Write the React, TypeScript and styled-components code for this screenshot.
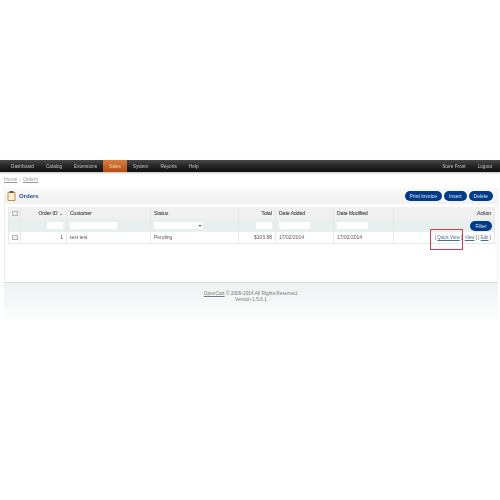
import styled, { createGlobalStyle } from "styled-components";

const Global = createGlobalStyle`
  html, body {
    margin: 0;
    padding: 0;
    background: #fff;
  }
  body {
    font-family: "Liberation Sans", Arial, sans-serif;
    font-size: 5px;
    color: #555;
  }
  * { box-sizing: border-box; }
`;

const Page = styled.div`
  width: 500px;
  height: 500px;
  padding-top: 160px;
  overflow: hidden;
  filter: blur(0.35px);
`;

const Nav = styled.div`
  height: 12px;
  display: flex;
  align-items: center;
  justify-content: space-between;
  background: linear-gradient(#474747, #222 55%, #111);
  box-shadow: 0 1px 2px rgba(0, 0, 0, 0.25);
`;

const NavGroup = styled.div<{ $pad?: number }>`
  display: flex;
  height: 100%;
  padding-left: ${({ $pad }) => $pad ?? 0}px;
  padding-right: ${({ $pad }) => ($pad ? 0 : 2)}px;
`;

const NavItem = styled.a<{ $active?: boolean }>`
  display: flex;
  align-items: center;
  padding: 0 6px;
  color: ${({ $active }) => ($active ? "#f3d3ba" : "#c4c4c4")};
  background: ${({ $active }) =>
    $active ? "linear-gradient(#d97f3f, #b64c12)" : "transparent"};
  font-size: 4.7px;
`;

const Breadcrumb = styled.div`
  height: 14px;
  padding: 4px 0 0 4px;
  color: #999;
  font-size: 5px;
  line-height: 6px;
`;

const Crumb = styled.span`
  text-decoration: underline;
`;

const Box = styled.div`
  margin: 2px 2px 0 4px;
  height: 94px;
  border-left: 1px solid #f0f0f0;
  border-right: 1px solid #f0f0f0;
`;

const Heading = styled.div`
  height: 16px;
  display: flex;
  align-items: center;
  justify-content: space-between;
  padding: 0 4px 0 2px;
  background: linear-gradient(#f9f9f9, #f2f2f2);
`;

const HeadTitle = styled.div`
  display: flex;
  align-items: center;
  gap: 3px;
  color: #1a4a8c;
  font-size: 6px;
  font-weight: bold;
`;

const Buttons = styled.div`
  display: flex;
  gap: 2px;
`;

const Button = styled.a`
  display: flex;
  align-items: center;
  justify-content: center;
  height: 10px;
  padding: 0 5px;
  border-radius: 5px;
  background: #003a88;
  color: #dfe8f5;
  font-size: 5px;
`;

const FilterButton = styled(Button)`
  display: inline-flex;
  width: 22px;
  margin-right: -1px;
`;

const Content = styled.div`
  padding: 3px 3px 0 3px;
`;

const Table = styled.table`
  width: 486px;
  table-layout: fixed;
  border-collapse: collapse;
  border-bottom: 1px solid #e8e8e8;
`;

const Col = styled.col<{ $w: number }>`
  width: ${({ $w }) => $w}px;
`;

const HeadRow = styled.tr`
  height: 12px;
  background: #f0f0f0;
`;

const FilterRow = styled.tr`
  height: 13px;
  background: #e8f0ef;
`;

const Row = styled.tr`
  height: 11px;
  background: #fff;
`;

const Cell = styled.td<{ $align?: string; $head?: boolean }>`
  padding: 0 3px;
  text-align: ${({ $align }) => $align ?? "left"};
  border-left: 1px solid #e8e8e8;
  border-right: 1px solid #e8e8e8;
  color: #555;
  font-size: 5px;
  white-space: nowrap;
  overflow: hidden;
  -webkit-text-stroke: ${({ $head }) => ($head ? "0.15px #555" : "0")};
`;

const ActionCell = styled(Cell)`
  font-size: 4.5px;
`;

const Check = styled.span`
  display: inline-block;
  width: 6px;
  height: 5px;
  vertical-align: middle;
  background: #eee;
  border: 1px solid #b5b5b5;
`;

const Input = styled.span<{ $w: number }>`
  display: inline-block;
  vertical-align: middle;
  width: ${({ $w }) => $w}px;
  height: 7px;
  background: #fff;
`;

const SelectBox = styled.span`
  display: flex;
  align-items: center;
  justify-content: flex-end;
  width: 49px;
  height: 7px;
  padding-right: 2px;
  background: #fff;
  color: #111;
  font-size: 4px;
`;

const ActionLink = styled.span`
  color: #4a6d9c;
  text-decoration: underline;
`;

const Marker = styled.div`
  position: absolute;
  left: 430px;
  top: 229px;
  width: 33px;
  height: 21px;
  border: 1px solid #d0404a;
`;

const Footer = styled.div`
  height: 60px;
  padding-top: 8px;
  margin: 0 2px 0 4px;
  border-top: 1px solid #dde0e3;
  background: linear-gradient(#eef1f2, #fff 70%);
  text-align: center;
  color: #777;
  font-size: 4.8px;
  line-height: 5.5px;
`;

const columns = [12, 46, 84, 88, 37, 58, 60, 101];

export default function App() {
  return (
    <Page>
      <Global />
      <Nav>
        <NavGroup $pad={5}>
          <NavItem>Dashboard</NavItem>
          <NavItem>Catalog</NavItem>
          <NavItem>Extensions</NavItem>
          <NavItem $active>Sales</NavItem>
          <NavItem>System</NavItem>
          <NavItem>Reports</NavItem>
          <NavItem>Help</NavItem>
        </NavGroup>
        <NavGroup>
          <NavItem>Store Front</NavItem>
          <NavItem>Logout</NavItem>
        </NavGroup>
      </Nav>
      <Breadcrumb>
        <Crumb>Home</Crumb> :: <Crumb>Orders</Crumb>
      </Breadcrumb>
      <Box>
        <Heading>
          <HeadTitle>
            <svg width="9" height="10" viewBox="0 0 9 10">
              <rect x="0.5" y="1" width="8" height="9" rx="1" fill="#b98f4e" />
              <rect x="1.5" y="2" width="6" height="7" fill="#f7efd6" />
              <rect x="2.5" y="0" width="4" height="2" fill="#6f5b3a" />
            </svg>
            Orders
          </HeadTitle>
          <Buttons>
            <Button>Print Invoice</Button>
            <Button>Insert</Button>
            <Button>Delete</Button>
          </Buttons>
        </Heading>
        <Content>
          <Table>
            <colgroup>
              {columns.map((w, i) => (
                <Col key={i} $w={w} />
              ))}
            </colgroup>
            <tbody>
              <HeadRow>
                <Cell $align="center"><Check /></Cell>
                <Cell $head $align="right">Order ID ⌄</Cell>
                <Cell $head>Customer</Cell>
                <Cell $head>Status</Cell>
                <Cell $head $align="right">Total</Cell>
                <Cell $head>Date Added</Cell>
                <Cell $head>Date Modified</Cell>
                <Cell $head $align="right">Action</Cell>
              </HeadRow>
              <FilterRow>
                <Cell />
                <Cell $align="right"><Input $w={16} /></Cell>
                <Cell><Input $w={47} /></Cell>
                <Cell><SelectBox>▾</SelectBox></Cell>
                <Cell $align="right"><Input $w={16} /></Cell>
                <Cell><Input $w={31} /></Cell>
                <Cell><Input $w={31} /></Cell>
                <Cell $align="right"><FilterButton>Filter</FilterButton></Cell>
              </FilterRow>
              <Row>
                <Cell $align="center"><Check /></Cell>
                <Cell $align="right">1</Cell>
                <Cell>test test</Cell>
                <Cell>Pending</Cell>
                <Cell $align="right">$103.88</Cell>
                <Cell>17/02/2014</Cell>
                <Cell>17/02/2014</Cell>
                <ActionCell $align="right">
                  [ <ActionLink>Quick View</ActionLink> ][ <ActionLink>View</ActionLink> ] [ <ActionLink>Edit</ActionLink> ]
                </ActionCell>
              </Row>
            </tbody>
          </Table>
        </Content>
      </Box>
      <Footer>
        <Crumb>OpenCart</Crumb> © 2009-2014 All Rights Reserved.
        <br />
        Version 1.5.6.1
      </Footer>
      <Marker />
    </Page>
  );
}
